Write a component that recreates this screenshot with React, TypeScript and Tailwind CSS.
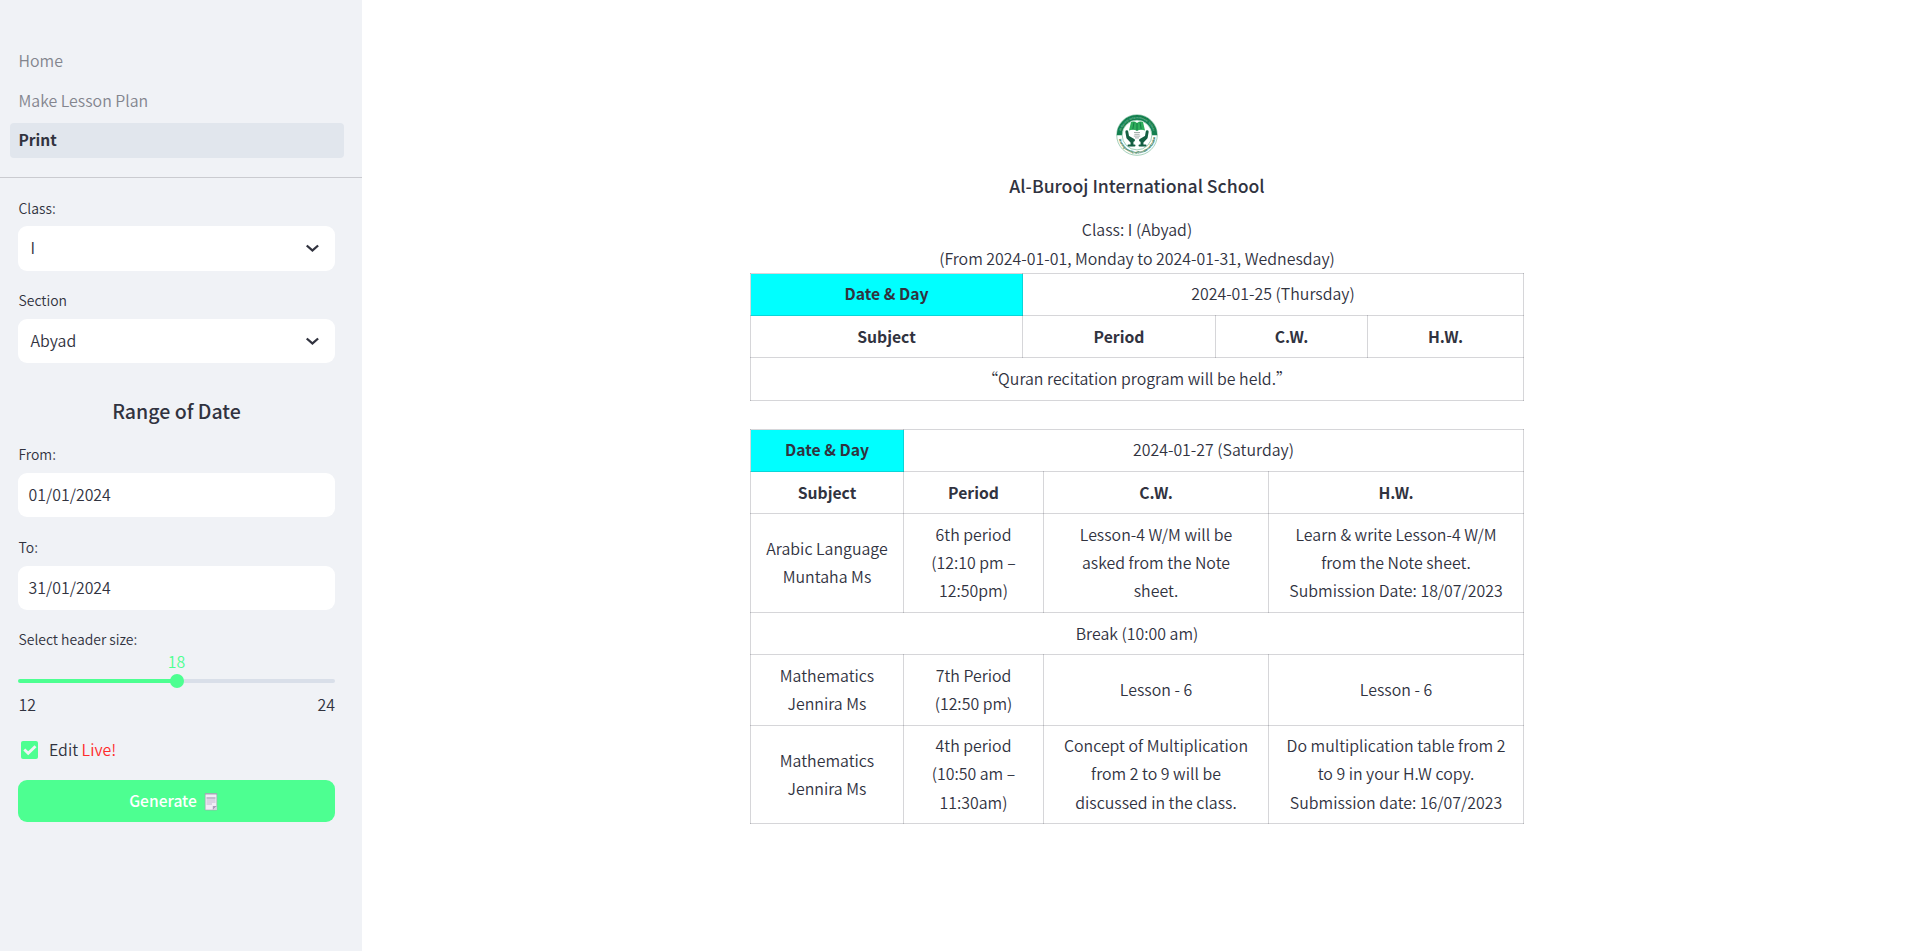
import React from "react";

function Chevron() {
  return (
    <svg width="21" height="21" viewBox="0 0 8 8" fill="#31333f">
      <path d="M1.5 2L0.75 2.75L3.9 5.6L7.05 2.75L6.3 2L3.9 4.1Z" transform="translate(0.93 1) scale(0.78)" />
    </svg>
  );
}

function Label({ children, className = "" }: { children: React.ReactNode; className?: string }) {
  return <div className={`pl-[0.5px] text-[13.95px] leading-[22px] ${className}`}>{children}</div>;
}

function Field({ value, select = false, className = "" }: { value: string; select?: boolean; className?: string }) {
  return (
    <div className={`flex items-center justify-between rounded-[9px] bg-white pr-3 ${select ? "pl-[12.5px]" : "pl-[10.5px]"} ${className}`}>
      <span>{value}</span>
      {select && <Chevron />}
    </div>
  );
}

function Logo() {
  return (
    <svg width="42" height="42" viewBox="0 0 42 42">
      <circle cx="21" cy="21" r="20.3" fill="#fff" stroke="#7dbb9d" strokeWidth="0.7" />
      <path d="M3.5 21.3A17.5 17.5 0 0 1 38.5 21.3" fill="none" stroke="#14804f" strokeWidth="5.4" />
      <defs>
        <path id="arcTop" d="M4.6 21A16.4 16.4 0 0 1 37.4 21" />
        <path id="arcBottom" d="M2.6 23A18.5 18.5 0 0 0 39.4 23" />
      </defs>
      <text fontSize="2.8" fill="#b4dcc8" textLength="43">
        <textPath href="#arcTop" startOffset="4">Al-Burooj International School</textPath>
      </text>
      <text fontSize="3.2" fontWeight="bold" fill="#0f6b42" textLength="52">
        <textPath href="#arcBottom" startOffset="2">Learning worship with modern education</textPath>
      </text>
      <circle cx="21" cy="21" r="14.9" fill="#fff" stroke="#5dac86" strokeWidth="0.6" />
      <path d="M15 8Q18.5 6.8 21 9Q23.5 6.8 27 8L29 16.5Q25 14.7 21 16.8Q17 14.7 13 16.5Z" fill="#2fae5b" />
      <path d="M21 9V16.8M18 8.2L16.8 15.4M24 8.2L25.2 15.4" stroke="#0c7040" strokeWidth="0.8" />
      <g fill="none" stroke="#155f42" strokeLinecap="round" strokeLinejoin="round">
        <path d="M10.8 17.8L11.8 23.5L16 28V30.8M12 23L17.5 26.2" strokeWidth="2.9" />
        <path d="M31.2 17.8L30.2 23.5L26 28V30.8M30 23L24.5 26.2" strokeWidth="2.9" />
        <path d="M12.5 31.6H18.5M23.5 31.6H29.5" strokeWidth="2" />
      </g>
      <path d="M18 18.5H24M18.4 20.3H23.6M17.8 22.1H24.2M19 23.9H23" stroke="#8d9a94" strokeWidth="0.8" />
    </svg>
  );
}

function NoteIcon() {
  return (
    <svg width="14" height="19" viewBox="0 0 14 19">
      <path d="M1.2 1.5H12.8V18H1.2Z" fill="#f1ecf7" stroke="#a7a0b2" strokeWidth="0.6" />
      <path d="M1.5 2H12.5" stroke="#998fa8" strokeWidth="1.4" strokeDasharray="1 1" />
      <path d="M2.5 6H11.5" stroke="#8d849e" strokeWidth="0.9" />
      <path d="M2.5 8H11.5M2.5 10H11.5M2.5 12H8" stroke="#bdb4cb" strokeWidth="0.9" />
      <path d="M8.8 18V14H12.8Z" fill="#a99fba" />
      <path d="M9.5 18L12.8 14.6V18Z" fill="#d5cfe0" />
    </svg>
  );
}

const cell = "border border-[#31333f]/20 p-0 text-center align-middle";

function Th({ children, cyan = false }: { children: React.ReactNode; cyan?: boolean }) {
  return <th className={`${cell} text-[15.72px] font-bold ${cyan ? "bg-[#00ffff] pb-px" : "pt-px"}`}>{children}</th>;
}

function Td({ lines, span = 1, className = "" }: { lines: string[]; span?: number; className?: string }) {
  return (
    <td colSpan={span} className={`${cell} ${className}`}>
      {lines.map((l) => (
        <div key={l} className="whitespace-nowrap">{l}</div>
      ))}
    </td>
  );
}

function HeadRow() {
  return (
    <tr className="h-[42px]">
      <Th>Subject</Th>
      <Th>Period</Th>
      <Th>C.W.</Th>
      <Th>H.W.</Th>
    </tr>
  );
}

export default function App() {
  return (
    <div className="flex h-[951px] w-[1912px] overflow-hidden bg-white font-['Noto_Sans_CJK_SC',sans-serif] text-[15.91px] font-[350] leading-[28.16px] text-[#31333f]">
      <aside className="flex w-[362px] shrink-0 flex-col bg-[#f0f2f6]">
        <nav className="flex flex-col pt-[43px] pr-[18px] pl-[10px]">
          <a className="h-[35px] px-[8.5px] leading-[35px] text-[#83858e]">Home</a>
          <a className="mt-[5px] h-[35px] px-[8.5px] leading-[35px] text-[#83858e]">Make Lesson Plan</a>
          <a className="mt-[5px] h-[35px] rounded-[4px] bg-[#e1e6ed] px-[8.5px] text-[15.5px] font-bold leading-[33px]">Print</a>
        </nav>
        <div className="mt-[19px] h-px bg-[#cacbd0]" />
        <div className="flex flex-col pr-[27px] pl-[18px]">
          <Label className="mt-[19px]">Class:</Label>
          <Field value="I" select className="mt-[7px] h-[45px]" />
          <Label className="mt-[18px]">Section</Label>
          <Field value="Abyad" select className="mt-[8px] h-[44px]" />
          <h3 className="mt-[32px] h-[32px] text-center text-[19.55px] font-medium leading-[32px]">Range of Date</h3>
          <Label className="mt-4">From:</Label>
          <Field value="01/01/2024" className="mt-[8px] h-[44px]" />
          <Label className="mt-[19px]">To:</Label>
          <Field value="31/01/2024" className="mt-[8px] h-[44px]" />
          <Label className="mt-[18px]">Select header size:</Label>
          <div className="mt-[2px] h-[20px] text-center leading-[20px] text-[#4dff91]">18</div>
          <div className="mt-[2px] flex h-[14px] items-center">
            <div className="h-1 flex-1 rounded-l-full bg-[#4dff91]" />
            <div className="z-10 -mx-[7px] size-[14px] rounded-full bg-[#4dff91]" />
            <div className="h-1 flex-1 rounded-r-full bg-[#d9dfe9]" />
          </div>
          <div className="mt-[3px] flex justify-between pl-[0.5px]">
            <span>12</span>
            <span>24</span>
          </div>
          <div className="mt-[17px] flex items-center">
            <div className="ml-[3px] flex h-[18px] w-[17px] items-center justify-center rounded-[2px] bg-[#4dff91]">
              <svg width="14" height="12" viewBox="0 0 14 12" fill="none" stroke="#f0f2f6" strokeWidth="2.8">
                <path d="M1.3 5.6L5.2 9.3L12.5 2.2" />
              </svg>
            </div>
            <span className="ml-[11px] whitespace-pre">
              Edit <span className="text-[#ff2b2b]">Live!</span>
            </span>
          </div>
          <button className="mt-[16px] flex h-[42px] items-center justify-center rounded-[9px] bg-[#4dff91] text-[15.6px] font-medium text-white">
            <span className="pb-[2px]">Generate</span>
            <span className="mr-[6px] ml-[7px]"><NoteIcon /></span>
          </button>
        </div>
      </aside>
      <main className="flex flex-1 flex-col pl-[388px]">
        <header className="flex w-[774px] flex-col items-center pt-[114px] text-center">
          <Logo />
          <h1 className="mt-[14px] h-[32px] text-[17.65px] font-medium leading-[32px]">Al-Burooj International School</h1>
          <p className="mt-[14px] h-[28px]">Class: I (Abyad)</p>
          <p className="mt-px h-[28px]">(From 2024-01-01, Monday to 2024-01-31, Wednesday)</p>
        </header>
        <table className="w-[774px] table-fixed border-collapse">
          <colgroup>
            <col className="w-[272px]" />
            <col className="w-[193px]" />
            <col className="w-[152px]" />
            <col className="w-[156px]" />
          </colgroup>
          <tbody>
            <tr className="h-[42px]">
              <Th cyan>Date &amp; Day</Th>
              <Td span={3} className="pb-px" lines={["2024-01-25 (Thursday)"]} />
            </tr>
            <HeadRow />
            <tr className="h-[43px]">
              <Td span={4} lines={["“Quran recitation program will be held.”"]} />
            </tr>
          </tbody>
        </table>
        <table className="mt-7 w-[774px] table-fixed border-collapse">
          <colgroup>
            <col className="w-[153px]" />
            <col className="w-[140px]" />
            <col className="w-[225px]" />
            <col className="w-[255px]" />
          </colgroup>
          <tbody>
            <tr className="h-[42px]">
              <Th cyan>Date &amp; Day</Th>
              <Td span={3} className="pb-px" lines={["2024-01-27 (Saturday)"]} />
            </tr>
            <HeadRow />
            <tr className="h-[99px]">
              <Td lines={["Arabic Language", "Muntaha Ms"]} />
              <Td lines={["6th period", "(12:10 pm –", "12:50pm)"]} />
              <Td lines={["Lesson-4 W/M will be", "asked from the Note", "sheet."]} />
              <Td lines={["Learn & write Lesson-4 W/M", "from the Note sheet.", "Submission Date: 18/07/2023"]} />
            </tr>
            <tr className="h-[42px]">
              <Td span={4} className="pt-px" lines={["Break (10:00 am)"]} />
            </tr>
            <tr className="h-[71px]">
              <Td lines={["Mathematics", "Jennira Ms"]} />
              <Td lines={["7th Period", "(12:50 pm)"]} />
              <Td lines={["Lesson - 6"]} />
              <Td lines={["Lesson - 6"]} />
            </tr>
            <tr className="h-[98px]">
              <Td className="pt-px" lines={["Mathematics", "Jennira Ms"]} />
              <Td lines={["4th period", "(10:50 am –", "11:30am)"]} />
              <Td lines={["Concept of Multiplication", "from 2 to 9 will be", "discussed in the class."]} />
              <Td lines={["Do multiplication table from 2", "to 9 in your H.W copy.", "Submission date: 16/07/2023"]} />
            </tr>
          </tbody>
        </table>
      </main>
    </div>
  );
}
